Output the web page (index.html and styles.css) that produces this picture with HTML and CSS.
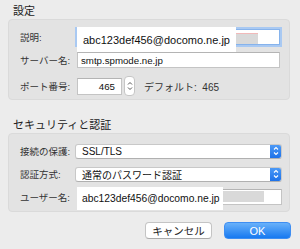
FILE: index.html
```html
<!DOCTYPE html>
<html>
<head>
    <title>アカウント設定</title>
    <link rel="stylesheet" href="styles.css">
</head>
<body>
    <div class="section-title first">設定</div>
    <div class="group">
        <div class="row">
            <span class="label">説明:</span>
            <div class="field focused">
                <span class="field-text"></span>
                <!-- 上に重ねた白い帯 -->
                <div class="cover cover-desc">abc123def456@docomo.ne.jp</div>
                <div class="blot blot-desc"></div>
            </div>
        </div>
        <div class="row">
            <span class="label">サーバー名:</span>
            <div class="field"><span class="field-text">smtp.spmode.ne.jp</span></div>
        </div>
        <div class="row row-port">
            <span class="label">ポート番号:</span>
            <div class="field port"><span class="field-text">465</span></div>
            <div class="stepper">
                <svg width="6" height="12" viewBox="0 0 6 12"><path d="M1 4.5 L3 2.5 L5 4.5 M1 7.5 L3 9.5 L5 7.5" fill="none" stroke="#555" stroke-width="1"/></svg>
            </div>
            <span class="default-text">デフォルト:&nbsp; 465</span>
        </div>
    </div>

    <div class="section-title">セキュリティと認証</div>
    <div class="group group-sec">
        <div class="row">
            <span class="label">接続の保護:</span>
            <div class="popup">
                <span class="popup-text">SSL/TLS</span>
                <span class="popup-arrow">
                    <svg width="6" height="10" viewBox="0 0 6 10"><path d="M1 3.5 L3 1.5 L5 3.5 M1 6.5 L3 8.5 L5 6.5" fill="none" stroke="#fff" stroke-width="1.1"/></svg>
                </span>
            </div>
        </div>
        <div class="row">
            <span class="label">認証方式:</span>
            <div class="popup">
                <span class="popup-text">通常のパスワード認証</span>
                <span class="popup-arrow">
                    <svg width="6" height="10" viewBox="0 0 6 10"><path d="M1 3.5 L3 1.5 L5 3.5 M1 6.5 L3 8.5 L5 6.5" fill="none" stroke="#fff" stroke-width="1.1"/></svg>
                </span>
            </div>
        </div>
        <div class="row">
            <span class="label">ユーザー名:</span>
            <div class="field">
                <span class="field-text"></span>
                <div class="cover cover-user">abc123def456@docomo.ne.jp</div>
                <div class="blot blot-user"></div>
            </div>
        </div>
    </div>

    <div class="buttons">
        <button class="btn">キャンセル</button>
        <button class="btn btn-ok">OK</button>
    </div>
</body>
</html>
```

FILE: styles.css
```css
body {
    margin: 0;
    background-color: #ececec;
    font-family: "Liberation Sans", "Noto Sans CJK JP", sans-serif;
    color: #2b2b2b;
    width: 300px;
    height: 249px;
    overflow: hidden;
}
.section-title {
    font-size: 11px;
    line-height: 14px;
    height: 14px;
    margin: 18px 0 0 13px;
    color: #222;
}
.section-title.first {
    margin-top: 4px;
}
.group {
    margin: 1px 10px 0 8px;
    background-color: #e3e3e3;
    border: 1px solid #dadada;
    border-radius: 4px;
    padding: 8px 9px 4px 11px;
    display: flex;
    flex-direction: column;
    gap: 5px;
}
.group-sec {
    padding: 8px 7px 5px 11px;
    gap: 5px;
}
.row {
    display: flex;
    align-items: center;
    height: 18px;
}
.row-port {
    margin-top: 3px;
}
.label {
    width: 57px;
    flex: none;
    font-size: 9.5px;
    color: #333;
    white-space: nowrap;
}
.field {
    position: relative;
    flex: 1;
    height: 16px;
    box-sizing: border-box;
    background: #fff;
    border: 1px solid #c4c4c4;
    border-top-color: #b4b4b4;
    display: flex;
    align-items: center;
}
.field.focused {
    border-color: #86b3ec;
    box-shadow: 0 0 0 2px #a9c9f2;
}
.field-text {
    font-size: 9.7px;
    color: #111;
    padding-left: 3px;
}
.field.port {
    flex: none;
    width: 45px;
    justify-content: flex-end;
    height: 17px;
}
.field.port .field-text {
    padding: 0 6px 0 0;
}
.stepper {
    width: 9px;
    height: 18px;
    margin-left: 2px;
    background: #fff;
    border: 1px solid #c6c6c6;
    border-radius: 4px;
    display: flex;
    align-items: center;
    justify-content: center;
}
.default-text {
    font-size: 10px;
    color: #333;
    margin-left: 9px;
}
.cover {
    position: absolute;
    background: #fff;
    font-size: 11px;
    color: #111;
    display: flex;
    align-items: center;
    padding-left: 6px;
    box-sizing: border-box;
    white-space: nowrap;
    overflow: hidden;
}
.cover-desc {
    left: -1px;
    top: -3px;
    width: 159px;
    height: 25px;
}
.cover-user {
    left: -1px;
    top: -3px;
    width: 146px;
    height: 23px;
    font-size: 10.3px;
    padding-left: 5px;
}
.blot {
    position: absolute;
    background: #d9d9d9;
}
.blot-desc {
    left: 158px;
    top: 3px;
    width: 22px;
    height: 10px;
    border-top: 1px solid #f1b9b9;
}
.blot-user {
    left: 145px;
    top: 1px;
    width: 41px;
    height: 11px;
}
.popup {
    flex: 1;
    margin-left: -2px;
    height: 15px;
    box-sizing: border-box;
    background: #fff;
    border: 1px solid #c8c8c8;
    border-bottom-color: #b0b0b0;
    border-radius: 3px;
    display: flex;
    align-items: center;
    overflow: hidden;
}
.popup-text {
    flex: 1;
    font-size: 10px;
    color: #111;
    padding-left: 6px;
}
.popup-arrow {
    width: 12px;
    height: 15px;
    margin-right: -1px;
    background: linear-gradient(#4f9cf7, #1a6fe8);
    display: flex;
    align-items: center;
    justify-content: center;
}
.buttons {
    display: flex;
    justify-content: flex-end;
    gap: 12px;
    margin: 10px 9px 0 0;
}
.btn {
    width: 67px;
    height: 17px;
    padding: 0;
    font-family: "Liberation Sans", "Noto Sans CJK JP", sans-serif;
    font-size: 10.5px;
    color: #222;
    background: #fff;
    border: 1px solid #c4c4c4;
    border-bottom-color: #aaa;
    border-radius: 4px;
}
.btn-ok {
    color: #fff;
    background: linear-gradient(#69b1fa, #1779f0);
    border-color: #3e8ef2;
    font-size: 11px;
}
```
